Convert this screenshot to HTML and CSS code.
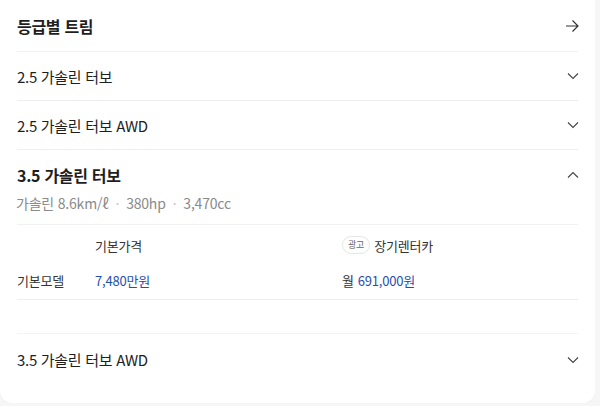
FILE: index.html
```html
<!DOCTYPE html>
<html lang="ko">

<head>
    <meta charset="UTF-8">
    <meta name="viewport" content="width=device-width, initial-scale=1.0">
    <title>등급별 트림</title>

    <link rel="stylesheet" href="styles.css">
</head>

<body>

    <!-- 트림 카드 -->
    <div class="card">

        <!-- 헤더 -->
        <div class="card-head">
            <h2 class="card-title">등급별 트림</h2>
            <svg class="icon" width="14" height="14" viewBox="0 0 14 14">
                <path d="M1 7H13M7.5 1.5L13 7L7.5 12.5" fill="none" stroke="#333" stroke-width="1.2"/>
            </svg>
        </div>

        <!-- 접힌 트림 -->
        <div class="trim">
            <span class="trim-name">2.5 가솔린 터보</span>
            <svg class="icon" width="12" height="12" viewBox="0 0 12 12">
                <path d="M1 3.5L6 8.5L11 3.5" fill="none" stroke="#444" stroke-width="1.1"/>
            </svg>
        </div>

        <div class="trim">
            <span class="trim-name">2.5 가솔린 터보 AWD</span>
            <svg class="icon" width="12" height="12" viewBox="0 0 12 12">
                <path d="M1 3.5L6 8.5L11 3.5" fill="none" stroke="#444" stroke-width="1.1"/>
            </svg>
        </div>

        <!-- 펼친 트림 -->
        <div class="trim-open">
            <div class="trim-open-head">
                <span class="trim-name bold">3.5 가솔린 터보</span>
                <svg class="icon" width="12" height="12" viewBox="0 0 12 12">
                    <path d="M1 8.5L6 3.5L11 8.5" fill="none" stroke="#444" stroke-width="1.1"/>
                </svg>
            </div>
            <div class="spec">
                <span>가솔린 8.6km/ℓ</span>
                <span class="dot">·</span>
                <span>380hp</span>
                <span class="dot">·</span>
                <span>3,470cc</span>
            </div>
        </div>

        <!-- 가격표 -->
        <div class="price-table">
            <div class="price-row head">
                <span class="col-name"></span>
                <span class="col-base">기본가격</span>
                <span class="col-rent"><em class="badge">광고</em>장기렌터카</span>
            </div>
            <div class="price-row">
                <span class="col-name">기본모델</span>
                <span class="col-base blue">7,480만원</span>
                <span class="col-rent">월 <b class="blue">691,000원</b></span>
            </div>
        </div>

        <div class="gap"></div>

        <div class="trim last">
            <span class="trim-name">3.5 가솔린 터보 AWD</span>
            <svg class="icon" width="12" height="12" viewBox="0 0 12 12">
                <path d="M1 3.5L6 8.5L11 3.5" fill="none" stroke="#444" stroke-width="1.1"/>
            </svg>
        </div>

    </div>

</body>

</html>
```

FILE: styles.css
```css
* {
    margin: 0;
    padding: 0;
    box-sizing: border-box;
}

body {
    background-color: #f6f6f7;
    font-family: "Noto Sans CJK KR", "Noto Sans", sans-serif;
    color: #1e1e1e;
}

/* 카드 */
.card {
    width: 595px;
    height: 403px;
    background-color: #fff;
    border-radius: 0 0 12px 12px;
    box-shadow: 0 1px 1px rgba(0, 0, 0, 0.04);
    padding: 0 17px;
}

.card-head {
    height: 52px;
    display: flex;
    align-items: center;
    justify-content: space-between;
    border-bottom: 1px solid #f1f1f1;
}

.card-title {
    font-size: 16px;
    font-weight: 700;
    letter-spacing: -0.3px;
}

.icon {
    flex: none;
    margin-right: -1px;
}

/* 트림 행 */
.trim {
    height: 49px;
    display: flex;
    align-items: center;
    justify-content: space-between;
    border-bottom: 1px solid #eeeeee;
}

.trim.last {
    height: 52px;
    border-bottom: none;
    border-top: 1px solid #f3f3f3;
}

.trim-name {
    font-size: 15px;
    letter-spacing: -0.3px;
}

.trim-name.bold {
    font-size: 16px;
    font-weight: 700;
}

.trim-open {
    height: 75px;
    padding-top: 13px;
    border-bottom: 1px solid #f1f1f1;
}

.trim-open-head {
    height: 24px;
    display: flex;
    align-items: center;
    justify-content: space-between;
}

.spec {
    margin-top: 6px;
    margin-left: -1px;
    font-size: 14px;
    color: #8a8a8a;
    display: flex;
    gap: 7px;
    letter-spacing: -0.2px;
}

.spec .dot {
    color: #c8c8c8;
}

/* 가격표 */
.price-table {
    border-bottom: 1px solid #eeeeee;
}

.price-row {
    height: 37px;
    display: flex;
    align-items: center;
    font-size: 13px;
    letter-spacing: -0.2px;
}

.price-row.head {
    height: 38px;
    padding-top: 2px;
}

.price-row:last-child {
    height: 36px;
    padding-bottom: 2px;
}

.col-name {
    width: 78px;
    color: #333;
}

.col-base {
    width: 247px;
    color: #333;
}

.col-rent {
    display: flex;
    align-items: center;
    color: #333;
}

.blue {
    color: #1f4fb0;
    font-weight: 400;
}

.col-rent .blue {
    margin-left: 4px;
}

.badge {
    font-style: normal;
    font-size: 9px;
    color: #666;
    border: 1px solid #e6e6e6;
    border-radius: 9px;
    padding: 2px 5px;
    margin-right: 4px;
    line-height: 12px;
}

.gap {
    height: 33px;
}
```
